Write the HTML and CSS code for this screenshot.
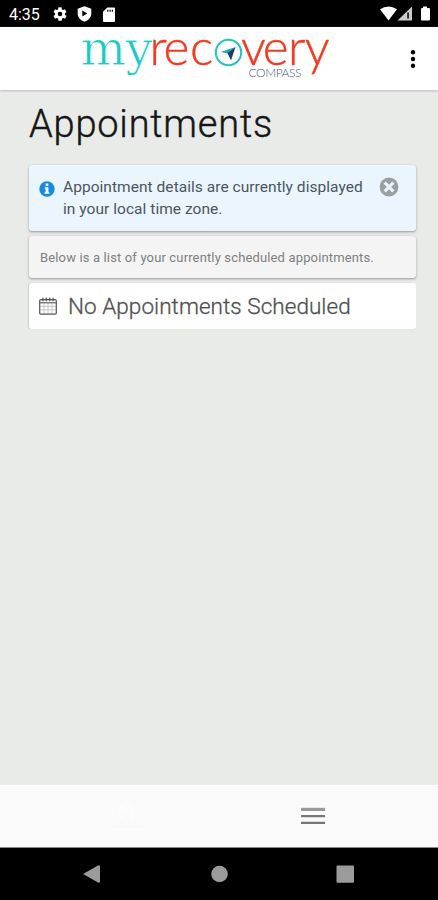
FILE: index.html
```html
<!DOCTYPE html>
<html lang="en">
<head>
<meta charset="utf-8">
<title>Appointments</title>
<link rel="stylesheet" href="styles.css">
</head>
<body>
<div class="screen">
  <div class="status">
    <span class="time">4:35</span>
    <svg class="gear" width="16" height="16" viewBox="0 0 24 24"><path fill="#fff" fill-rule="evenodd" d="M19.4 13a7.8 7.8 0 0 0 0-2l2.1-1.6a.5.5 0 0 0 .1-.7l-2-3.4a.5.5 0 0 0-.6-.2l-2.5 1a7.300 7.300 0 0 0-1.700-1L14.500 2.400a.5.5 0 0 0-.5-.4h-4a.5.5 0 0 0-.5.400l-.4 2.700a7.700 7.700 0 0 0-1.700 1l-2.400-1a.5.5 0 0 0-.6.2l-2 3.400a.5.5 0 0 0 .1.700L4.600 11a8 8 0 0 0 0 2l-2.100 1.600a.5.5 0 0 0-.1.700l2 3.400c.1.2.4.3.6.2l2.500-1c.5.4 1.100.7 1.700 1l.4 2.700c0 .2.2.4.5.4h4c.2 0 .5-.2.5-.4l.4-2.700c.6-.3 1.200-.6 1.700-1l2.400 1c.2.1.5 0 .6-.2l2-3.400a.5.5 0 0 0-.1-.7zM12 15.500a3.500 3.500 0 1 1 0-7 3.500 3.500 0 0 1 0 7z"/></svg>
    <svg class="shield" width="15" height="16" viewBox="0 0 15 16"><path fill="#fff" fill-rule="evenodd" d="M7.500.3 14.300 2.800V7.500c0 4-2.800 6.800-6.800 8.200C3.500 14.300.7 11.500.7 7.500V2.800zM5.300 4.600v6l5-3z"/></svg>
    <svg class="sd" width="12" height="15" viewBox="0 0 12 15"><path fill="#fff" fill-rule="evenodd" d="M4.300.5H11q1 0 1 1V14q0 1-1 1H1q-1 0-1-1V4.700zM4.200 2.800v2h1.200v-2zm2.300 0v2h1.200v-2zm2.300 0v2H10v-2z"/></svg>
    <svg class="signals" width="50" height="16" viewBox="0 0 50 16"><path fill="#fff" d="M0 3.300Q8.500-2.500 17 3.300L8.500 14.500z"/><path fill="#ccc" d="M17.500 14.500 32 .5v14z"/><path fill="#000" d="M27.300 6.500h1.500v6h-1.500z"/><path fill="#fff" d="M43 .5h4V2h2q1 0 1 1v10.500q0 1-1 1h-7q-1 0-1-1V3q0-1 1-1h1z"/></svg>
  </div>
  <header class="header">
    <svg class="logo" width="254" height="50" viewBox="80 33 254 50">
      <text class="my" x="80.500" y="65" textLength="72">my</text>
      <text class="rec" x="149.500 163.500 190" y="65">rec</text>
      <circle cx="228.500" cy="52.500" r="12.700" fill="none" stroke="#20c5bd" stroke-width="2"/>
      <path fill="#20aeb1" d="M235.500 47 220.500 52l7.500 1.500z"/>
      <path fill="#173d68" d="M235.500 47 227.500 53l3.500 7.500z"/>
      <text class="rec" x="241 262.700 288 304.800" y="65">very</text>
      <text class="compass" x="248.500" y="77.300" textLength="53">COMPASS</text>
    </svg>
    <svg class="more" width="6" height="20" viewBox="0 0 6 20"><circle cx="3" cy="3.200" r="2.200"/><circle cx="3" cy="10" r="2.200"/><circle cx="3" cy="16.800" r="2.200"/></svg>
  </header>
  <main class="content">
    <h1 class="title">Appointments</h1>
    <section class="card notice">
      <svg class="info" width="16" height="16" viewBox="0 0 16 16"><circle cx="8" cy="8" r="7.700" fill="#168ce0"/><path fill="#fff" d="M6.700 2.600h2.600v2.400H6.700zM5.800 6.300h3.600v5h1v1.500H5.600v-1.500h1V7.700h-.8z"/></svg>
      <p class="notice-text">Appointment details are currently displayed<br>in your local time zone.</p>
      <svg class="close" width="20" height="20" viewBox="0 0 20 20"><circle cx="10" cy="10" r="9.400" fill="#9a9fa2"/><path stroke="#eaf5fd" stroke-width="3.200" d="m5.700 5.700 8.600 8.600m0-8.600-8.600 8.600"/></svg>
    </section>
    <section class="card intro"><p class="intro-text">Below is a list of your currently scheduled appointments.</p></section>
    <section class="card empty">
      <svg class="cal" width="18" height="18" viewBox="0 0 18 18" fill="none"><path stroke="#aaa" stroke-width=".6" d="M1 9.300h16M1 12.800h16M5 6v11M9 6v11M13 6v11"/><rect x=".7" y="2.700" width="16.600" height="14.500" rx="1.300" stroke="#555" stroke-width="1.200"/><path stroke="#555" stroke-width="1.100" d="M1 5.800h16"/><path stroke="#555" stroke-width="1.300" d="M4 .8v3.400M7.300.8v3.400M10.700.8v3.400M14 .8v3.400"/></svg>
      <h2 class="empty-text">No Appointments Scheduled</h2>
    </section>
  </main>
  <nav class="tabs">
    <div class="tab"><svg class="home" width="34" height="36" viewBox="0 0 34 36" fill="#fff"><path d="M17 1 6 12h3v10h6v-6h5v6h6V12h3z"/><path d="M0 30h34v3H0z"/></svg></div>
    <div class="tab"><svg class="menu" width="24" height="18" viewBox="0 0 24 18"><path fill="#999" d="M0 .8h24v3.200H0z"/><path fill="#777" d="M0 8h24v2.300H0zM0 14.700h24V17H0z"/></svg></div>
  </nav>
  <div class="system">
    <svg width="272" height="18" viewBox="0 0 272 18" fill="#9b9b9b"><path d="M0 9 15.500.2Q17 0 17 1.200v15.600q0 1.200-1.500 1z"/><circle cx="136.500" cy="9" r="8.300"/><rect x="253.500" y=".4" width="17.500" height="17.300" rx="1"/></svg>
  </div>
</div>
</body>
</html>
```

FILE: styles.css
```css
* { box-sizing: border-box; }
body { margin: 0; font-family: Roboto, "Liberation Sans", sans-serif; }
svg { display: block; flex: none; }
h1, h2, p { margin: 0; font-weight: 400; white-space: nowrap; }
.screen { width: 438px; height: 900px; display: flex; flex-direction: column; background: #e9ebe8; overflow: hidden; }
.status { height: 27px; background: #000; display: flex; align-items: center; padding: 1px 9px 0; color: #fff; }
.time { width: 43px; font-size: 16px; line-height: 27px; }
.shield { margin-left: 9px; }
.sd { margin-left: 11px; }
.signals { margin-left: auto; margin-right: -1px; }
.header { height: 63px; background: #fff; display: flex; align-items: flex-start; padding: 6px 21px 0 80px; box-shadow: 0 1px 2px #bbb; }
.logo { overflow: visible; }
.more { margin: 16px 1px 0 auto; }
.my { font: 48px "DejaVu Serif", serif; fill: #20c9c0; stroke: #fff; stroke-width: .8px; }
.rec { font: 300 49.500px Lato, sans-serif; fill: #f23a20; stroke: #f23a20; stroke-width: .4px; }
.compass { font: 300 12px Lato, sans-serif; fill: #40567c; }
.content { flex: 1; padding: 12px 22px 0 29px; }
.title { height: 63px; font-size: 38px; line-height: 44px; color: #151716; font-weight: 300; letter-spacing: .78px; -webkit-text-stroke: .4px #151716; }
.card { border-radius: 3px; margin-bottom: 5px; display: flex; box-shadow: 0 1px 3px #aaa, 0 1px 1px #bbb; }
.notice { height: 66px; background: #eaf5fe; padding: 11px 17px 0 10px; }
.info { margin-top: 5px; }
.notice-text { margin-left: 8px; font-size: 15.500px; line-height: 22px; color: #4c565c; letter-spacing: .045px; }
.close { margin: 1px 0 0 auto; }
.intro { height: 42px; background: #f4f4f4; align-items: center; padding-left: 11px; }
.intro-text { font-size: 13px; letter-spacing: .145px; color: #808080; }
.empty { height: 46px; background: #fff; align-items: center; padding-left: 10px; box-shadow: -1px 0 1px #ccc; }
.empty-text { margin-left: 11px; font-size: 22.500px; letter-spacing: .05px; color: #505050; font-weight: 300; -webkit-text-stroke: .3px #505050; }
.tabs { height: 63px; background: #fafafa; display: flex; padding: 0 32px; border-top: 1px solid #fff; border-bottom: 1px solid #888; }
.tab { flex: 1; display: flex; justify-content: center; align-items: center; padding-bottom: 2px; }
.home { opacity: .55; }
.system { height: 52px; background: #000; display: flex; justify-content: center; align-items: center; }
```
